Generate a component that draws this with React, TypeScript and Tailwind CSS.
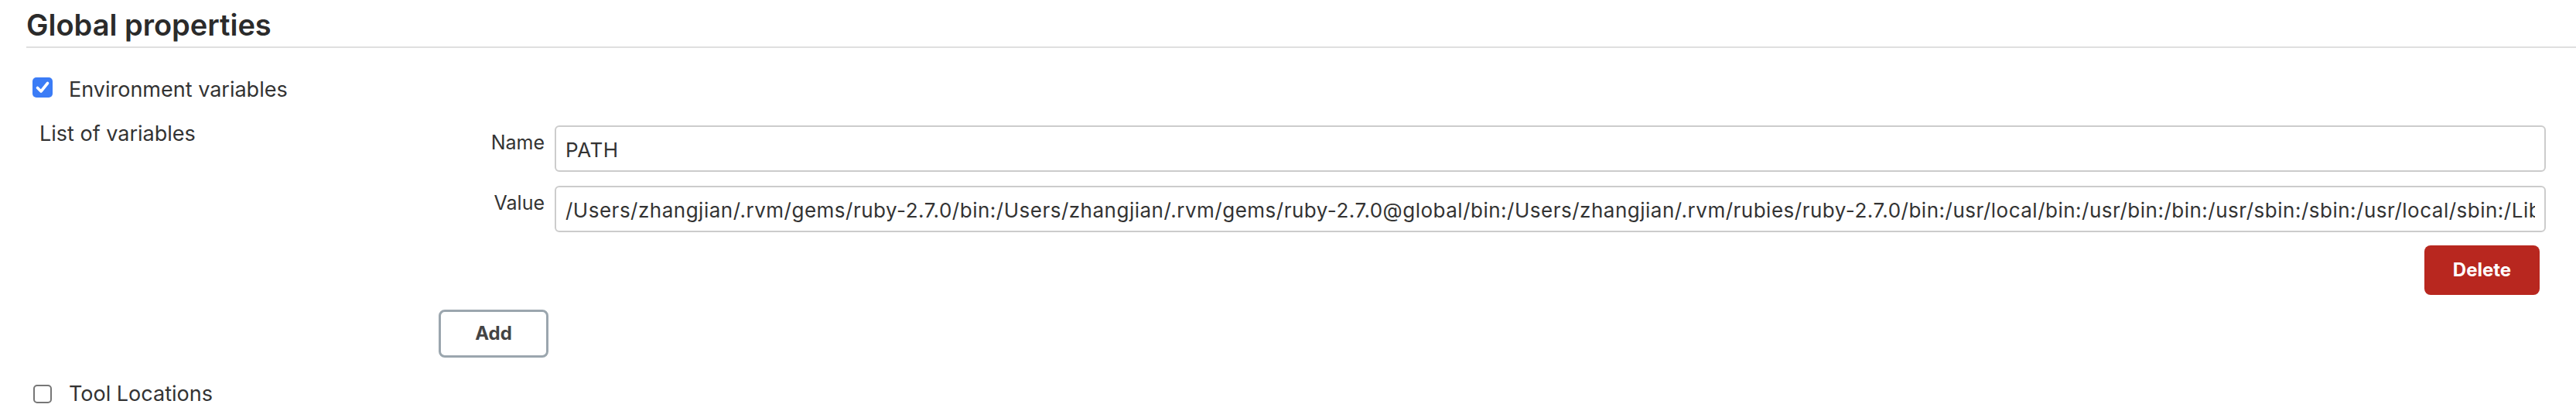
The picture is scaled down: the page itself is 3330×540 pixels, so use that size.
import {FC} from 'react'

const PATH_VALUE =
  '/Users/zhangjian/.rvm/gems/ruby-2.7.0/bin:/Users/zhangjian/.rvm/gems/ruby-2.7.0@global/bin:/Users/zhangjian/.rvm/rubies/ruby-2.7.0/bin:/usr/local/bin:/usr/bin:/bin:/usr/sbin:/sbin:/usr/local/sbin:/Library/Apple/usr/bin:/Users/zhangjian/.rvm/bin'

const CheckBox: FC<{checked?: boolean}> = ({checked}) =>
  checked ? (
    <span className="flex h-[26px] w-[26px] shrink-0 items-center justify-center rounded-[5px] bg-[#3b7cf6]">
      <svg viewBox="0 0 26 26" className="h-[26px] w-[26px]">
        <path d="M6.5 13.5 L11 18 L19.5 7.5" fill="none" stroke="white" strokeWidth="3.6" strokeLinecap="round" strokeLinejoin="round"/>
      </svg>
    </span>
  ) : (
    <span className="block h-[24px] w-[24px] shrink-0 rounded-[5px] border-2 border-[#767676] bg-white"/>
  )

const Field: FC<{label: string, value: string, className?: string}> = ({label, value, className}) => (
  <div className={`flex ${className ?? ''}`}>
    <div className="w-[150px] shrink-0 pr-[13px] pt-[6px] text-right text-[25px] leading-[32px]">{label}</div>
    <input
      readOnly
      value={value}
      className="h-[60px] min-w-0 flex-1 rounded-[6px] border-2 border-[#cccccc] bg-white pl-[12px] pr-[12px] pt-[3px] text-[26px] tracking-[0.5px] text-[#333] outline-none"
    />
  </div>
)

export default function App() {
  return (
    <div className="min-h-[540px] w-full bg-white font-['Inter',sans-serif] text-[#333]">
      <div className="ml-[34px] border-b-2 border-[#e0e0e0] pb-[4px] pt-[8px]">
        <h2 className="text-[38px] font-semibold leading-[48px] text-[#2b2b2b]">Global properties</h2>
      </div>

      <div className="mt-[34px] flex items-start pl-[42px]">
        <span className="mt-[4px]"><CheckBox checked/></span>
        <span className="ml-[21px] mt-[3px] text-[27px] leading-[34px]">Environment variables</span>
      </div>

      <div className="mt-[24px] flex pl-[51px]">
        <div className="w-[516px] shrink-0 text-[27px] leading-[32px]">List of variables</div>
        <div className="mt-[5px] flex-1 pr-[39px]">
          <Field label="Name" value="PATH"/>
          <Field label="Value" value={PATH_VALUE} className="mt-[18px]"/>
          <div className="mt-[17px] flex justify-end pr-[8px]">
            <button className="h-[64px] w-[149px] rounded-[8px] bg-[#b8271f] text-[24px] font-bold text-white">Delete</button>
          </div>
          <button className="mt-[19px] h-[62px] w-[142px] rounded-[8px] border-[3px] border-[#9ba6ae] bg-white text-[24px] font-bold text-[#444]">Add</button>
        </div>
      </div>

      <div className="mt-[30px] flex items-center pl-[43px]">
        <CheckBox/>
        <span className="ml-[22px] text-[27px] leading-[34px]">Tool Locations</span>
      </div>
    </div>
  )
}
